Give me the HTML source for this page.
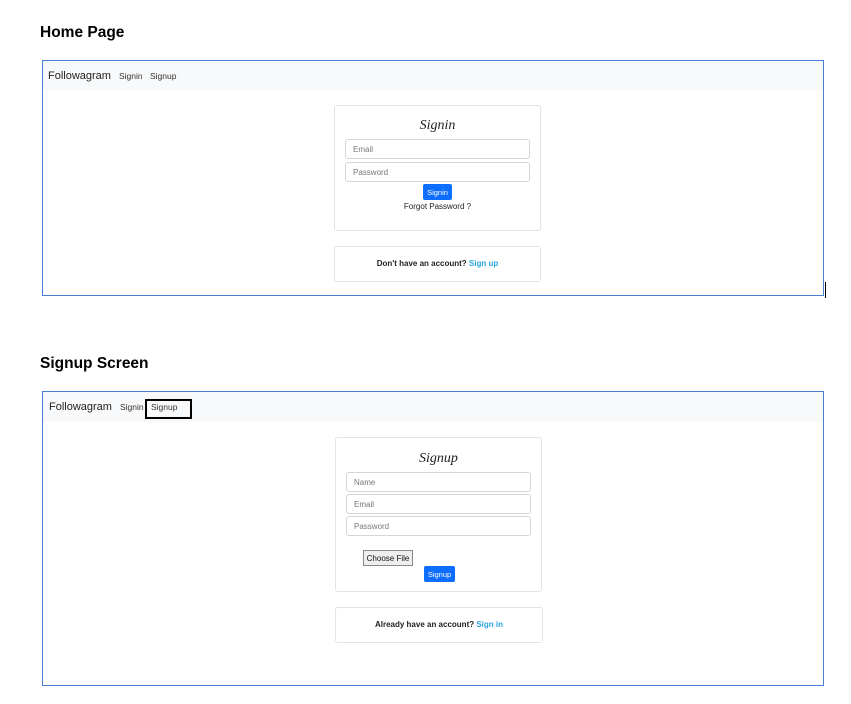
<!DOCTYPE html>
<html><head><style>
*{box-sizing:border-box;margin:0;padding:0}
body{width:851px;height:704px;background:#fff;position:relative;font-family:"Liberation Sans",sans-serif;overflow:hidden}
.a{position:absolute}
.h{font-weight:bold;font-size:15.5px;color:#000;left:40px}
.fr{border:1px solid #4a7fd4;left:42px;width:782px}
.nav{background:#f8f9fa;left:0;top:0;right:0;height:29px}
.brand{font-size:11px;color:#222;top:9px}
.nl{font-size:8.5px;color:#333;top:10px}
.card{border:1px solid #e3e3e3;border-radius:3px;background:#fff}
.inp{border:1px solid #d6d6d6;border-radius:3px;font-size:8px;color:#777;padding:5px 0 0 7px}
.btn{background:#0d6efd;color:#fff;font-size:7.5px;border-radius:2px;text-align:center;padding-top:4px}
.ttl{font-family:"Liberation Serif",serif;font-style:italic;font-size:14px;color:#222;text-align:center;width:100%}
.t{font-size:8px;color:#222;text-align:center;width:100%}
.lk{color:#29a3e0;font-weight:bold}
</style></head><body>
<div class="a h" style="top:24px">Home Page</div>
<div class="a fr" style="top:60px;height:236px">
 <div class="a nav"></div>
 <div class="a brand" style="left:5px">Followagram</div>
 <div class="a nl" style="left:76px">Signin</div>
 <div class="a nl" style="left:107px">Signup</div>
 <div class="a card" style="left:291px;top:44px;width:207px;height:126px">
  <div class="a ttl" style="top:12px">Signin</div>
  <div class="a inp" style="left:10px;top:33px;width:185px;height:20px">Email</div>
  <div class="a inp" style="left:10px;top:56px;width:185px;height:20px">Password</div>
  <div class="a btn" style="left:88px;top:78px;width:29px;height:16px">Signin</div>
  <div class="a t" style="top:96px">Forgot Password ?</div>
 </div>
 <div class="a card" style="left:291px;top:185px;width:207px;height:36px">
  <div class="a t" style="top:12px;font-weight:bold">Don't have an account? <span class="lk">Sign up</span></div>
 </div>
</div>
<div class="a" style="left:825px;top:282px;width:1px;height:16px;background:#000"></div>
<div class="a h" style="top:355px">Signup Screen</div>
<div class="a fr" style="top:391px;height:295px">
 <div class="a nav" style="height:30px"></div>
 <div class="a brand" style="left:6px">Followagram</div>
 <div class="a nl" style="left:77px">Signin</div>
 <div class="a" style="left:102px;top:7px;width:47px;height:20px;border:2px solid #000"></div>
 <div class="a nl" style="left:108px">Signup</div>
 <div class="a card" style="left:292px;top:45px;width:207px;height:155px">
  <div class="a ttl" style="top:13px">Signup</div>
  <div class="a inp" style="left:10px;top:34px;width:185px;height:20px">Name</div>
  <div class="a inp" style="left:10px;top:56px;width:185px;height:20px">Email</div>
  <div class="a inp" style="left:10px;top:78px;width:185px;height:20px">Password</div>
  <div class="a" style="left:27px;top:112px;width:50px;height:16px;border:1px solid #888;background:#eee;font-size:8px;text-align:center;padding-top:3px;color:#111">Choose File</div>
  <div class="a btn" style="left:88px;top:128px;width:31px;height:16px">Signup</div>
 </div>
 <div class="a card" style="left:292px;top:215px;width:208px;height:36px">
  <div class="a t" style="top:12px;font-weight:bold">Already have an account? <span class="lk">Sign in</span></div>
 </div>
</div>
</body></html>
